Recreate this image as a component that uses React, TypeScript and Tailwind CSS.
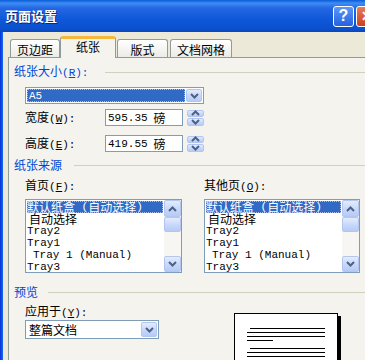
import type { ReactNode } from 'react'

const mono = "font-['Liberation_Mono','Noto_Sans_CJK_SC',monospace] text-[11px]"

function Key({ k }: { k: string }) {
  return (
    <span className={mono}>
      (<span className="underline">{k}</span>):
    </span>
  )
}

function Chevron({ up }: { up?: boolean }) {
  return (
    <svg width="9" height="6" viewBox="0 0 9 6">
      <path
        d={up ? 'M1 5 L4.5 1.5 L8 5' : 'M1 1 L4.5 4.5 L8 1'}
        fill="none"
        stroke="#4D6185"
        strokeWidth="2"
      />
    </svg>
  )
}

// XP style light-blue button face
function XpButton({ children, className = '' }: { children?: ReactNode; className?: string }) {
  return (
    <div
      className={`flex items-center justify-center rounded-[2px] border border-[#B3C6F0] bg-[linear-gradient(180deg,#E3ECFE_0%,#C9D9FB_50%,#B6CAF5_100%)] ${className}`}
    >
      {children}
    </div>
  )
}

function SectionHeader({ label, gap }: { label: ReactNode; gap: string }) {
  return (
    <div className="flex items-center pl-[5px] h-[14px]">
      <span className="text-[#0046D5] whitespace-nowrap">{label}</span>
      <div className={`flex-1 h-px bg-[#D0D0BF] ${gap}`} />
    </div>
  )
}

function SpinInput({ value }: { value: string }) {
  return (
    <div className="flex items-center">
      <div className="w-[78px] h-[17px] border border-[#7F9DB9] bg-white flex items-center pl-[2px]">
        <span className={mono}>{value}</span>
        <span className="ml-[6px]">磅</span>
      </div>
      <div className="ml-[4px] w-[17px] h-[16px] flex flex-col gap-px">
        <XpButton className="h-[7.5px]">
          <Chevron up />
        </XpButton>
        <XpButton className="h-[7.5px]">
          <Chevron />
        </XpButton>
      </div>
    </div>
  )
}

const trays = [
  { text: '自动选择', cjk: true, pad: 'pl-[3px]' },
  { text: 'Tray2', cjk: false, pad: 'pl-[1px]' },
  { text: 'Tray1', cjk: false, pad: 'pl-[1px]' },
  { text: 'Tray 1 (Manual)', cjk: false, pad: 'pl-[7px]' },
  { text: 'Tray3', cjk: false, pad: 'pl-[1px]' },
]

function TrayList({ width }: { width: string }) {
  return (
    <div className={`${width} h-[74px] border border-[#7F9DB9] bg-white flex`}>
      <div className="flex-1 pt-px">
        <div className="h-[12px] mx-px bg-[#316AC5] text-white flex items-center whitespace-nowrap outline outline-1 outline-dotted outline-[#A9BCE8] -outline-offset-1 leading-[12px]">
          默认纸盒<span className={mono}>&nbsp;(</span>自动选择<span className={mono}>)</span>
        </div>
        {trays.map((t) => (
          <div
            key={t.text}
            className={`h-[12px] flex items-center whitespace-nowrap leading-[12px] ${t.pad} ${t.cjk ? '' : mono}`}
          >
            {t.text}
          </div>
        ))}
      </div>
      <div className="w-[17px] flex flex-col bg-[#F7F6F2]">
        <XpButton className="h-[17px]">
          <Chevron up />
        </XpButton>
        <XpButton className="h-[15px]" />
        <div className="flex-1" />
        <XpButton className="h-[16px]">
          <Chevron />
        </XpButton>
      </div>
    </div>
  )
}

export default function App() {
  return (
    <div className="w-[365px] h-[360px] overflow-hidden flex bg-[#ECE9D8] font-['Noto_Sans_CJK_SC',sans-serif] text-[12px] leading-[14px] text-black">
      {/* left window frame */}
      <div className="w-[3px] shrink-0 bg-[linear-gradient(90deg,#0831D9,#166AEE)]" />

      <div className="flex-1 flex flex-col min-w-0 min-h-0">
        {/* title bar */}
        <div className="shrink-0 h-[32px] -ml-[3px] pl-[5px] flex items-center bg-[linear-gradient(180deg,#0A5BD6_0%,#3D8DF5_10%,#2567E2_25%,#0F58DA_60%,#0B50CD_90%,#0A46BC_100%)]">
          <span className="text-white font-bold text-[13px] [text-shadow:1px_1px_0_#0A2A80]">页面设置</span>
          <div className="ml-auto flex items-center gap-[2px] mr-[-12px]">
            <div className="w-[21px] h-[21px] rounded-[3px] border border-white bg-[linear-gradient(180deg,#5C98F6,#2461E0)] flex items-center justify-center text-white font-bold text-[16px] font-['Liberation_Sans',sans-serif]">
              ?
            </div>
            <div className="w-[21px] h-[21px] rounded-[3px] border border-white bg-[linear-gradient(180deg,#E87A5E,#C9401E)] flex items-center justify-center text-white font-bold text-[14px] font-['Liberation_Sans',sans-serif]">
              ✕
            </div>
          </div>
        </div>

        {/* tabs */}
        <div className="shrink-0 h-[21px] mt-[4px] ml-[7px] flex items-end">
          <div className="w-[50px] h-[18px] border border-b-0 border-[#919B9C] rounded-t-[3px] bg-[linear-gradient(180deg,#FFFFFF,#ECEBE6)] flex items-center justify-center pt-[2px]">
            页边距
          </div>
          <div className="relative z-10 -mb-px w-[56px] h-[22px] border border-b-0 border-[#919B9C] border-t-[3px] border-t-[#F5B83F] rounded-t-[3px] bg-[#F4F3EE] flex items-start justify-center pt-[1px]">
            纸张
          </div>
          <div className="ml-px w-[51px] h-[18px] border border-b-0 border-[#919B9C] rounded-t-[3px] bg-[linear-gradient(180deg,#FFFFFF,#ECEBE6)] flex items-center justify-center pt-[2px]">
            版式
          </div>
          <div className="ml-[2px] w-[62px] h-[18px] border border-b-0 border-[#919B9C] rounded-t-[3px] bg-[linear-gradient(180deg,#FFFFFF,#ECEBE6)] flex items-center justify-center pt-[2px]">
            文档网格
          </div>
        </div>

        {/* tab page */}
        <div className="ml-[5px] w-[370px] flex-1 min-h-0 overflow-hidden border border-r-0 border-b-0 border-[#919B9C] bg-[#F4F3EE] flex flex-col">
          <div className="shrink-0 mt-[7px]">
            <SectionHeader label={<>纸张大小<Key k="R" /></>} gap="ml-[17px]" />
          </div>

          {/* paper size dropdown */}
          <div className="shrink-0 mt-[8px] ml-[16px] w-[179px] h-[17px] border border-[#7F9DB9] bg-white flex p-px gap-px">
            <div className="flex-1 bg-[#316AC5] outline outline-1 outline-dotted outline-[#A9BCE8] -outline-offset-1 flex items-center pl-[2px]">
              <span className={`${mono} text-white`}>A5</span>
            </div>
            <XpButton className="w-[16px]">
              <Chevron />
            </XpButton>
          </div>

          <div className="shrink-0 mt-[5px] ml-[16px] flex items-center">
            <span className="w-[80px]">宽度<Key k="W" /></span>
            <SpinInput value="595.35" />
          </div>
          <div className="shrink-0 mt-[9px] ml-[16px] flex items-center">
            <span className="w-[80px]">高度<Key k="E" /></span>
            <SpinInput value="419.55" />
          </div>

          <div className="shrink-0 mt-[6px]">
            <SectionHeader label="纸张来源" gap="ml-[12px]" />
          </div>

          <div className="shrink-0 mt-[6px] ml-[16px] flex gap-[22px]">
            <div className="flex flex-col gap-[5px]">
              <span>首页<Key k="F" /></span>
              <TrayList width="w-[157px]" />
            </div>
            <div className="flex flex-col gap-[5px]">
              <span>其他页<Key k="O" /></span>
              <TrayList width="w-[156px]" />
            </div>
          </div>

          <div className="shrink-0 mt-[12px]">
            <SectionHeader label="预览" gap="ml-[10px]" />
          </div>

          <div className="shrink-0 mt-[5px] ml-[16px] flex items-start">
            <div className="flex flex-col">
              <span>应用于<Key k="Y" /></span>
              <div className="w-[134px] h-[19px] border border-[#7F9DB9] bg-white flex items-center p-px">
                <span className="flex-1 pl-[2px]">整篇文档</span>
                <XpButton className="w-[16px] h-[15px]">
                  <Chevron />
                </XpButton>
              </div>
            </div>

            {/* page preview */}
            <div className="ml-[75px] mt-[9px] w-[104px] h-[70px] border border-black bg-white shadow-[3px_3px_0_#000] flex flex-col pt-[14px] pl-[12px] gap-[3px]">
              <div className="ml-[3px] w-[75px] h-px bg-black" />
              <div className="w-[78px] h-px bg-black" />
              <div className="w-[78px] h-px bg-black" />
              <div className="w-[26px] h-px bg-black" />
              <div className="ml-[3px] mt-[4px] w-[75px] h-px bg-black" />
              <div className="w-[78px] h-px bg-black" />
              <div className="w-[78px] h-px bg-black" />
            </div>
          </div>
        </div>
      </div>
    </div>
  )
}
